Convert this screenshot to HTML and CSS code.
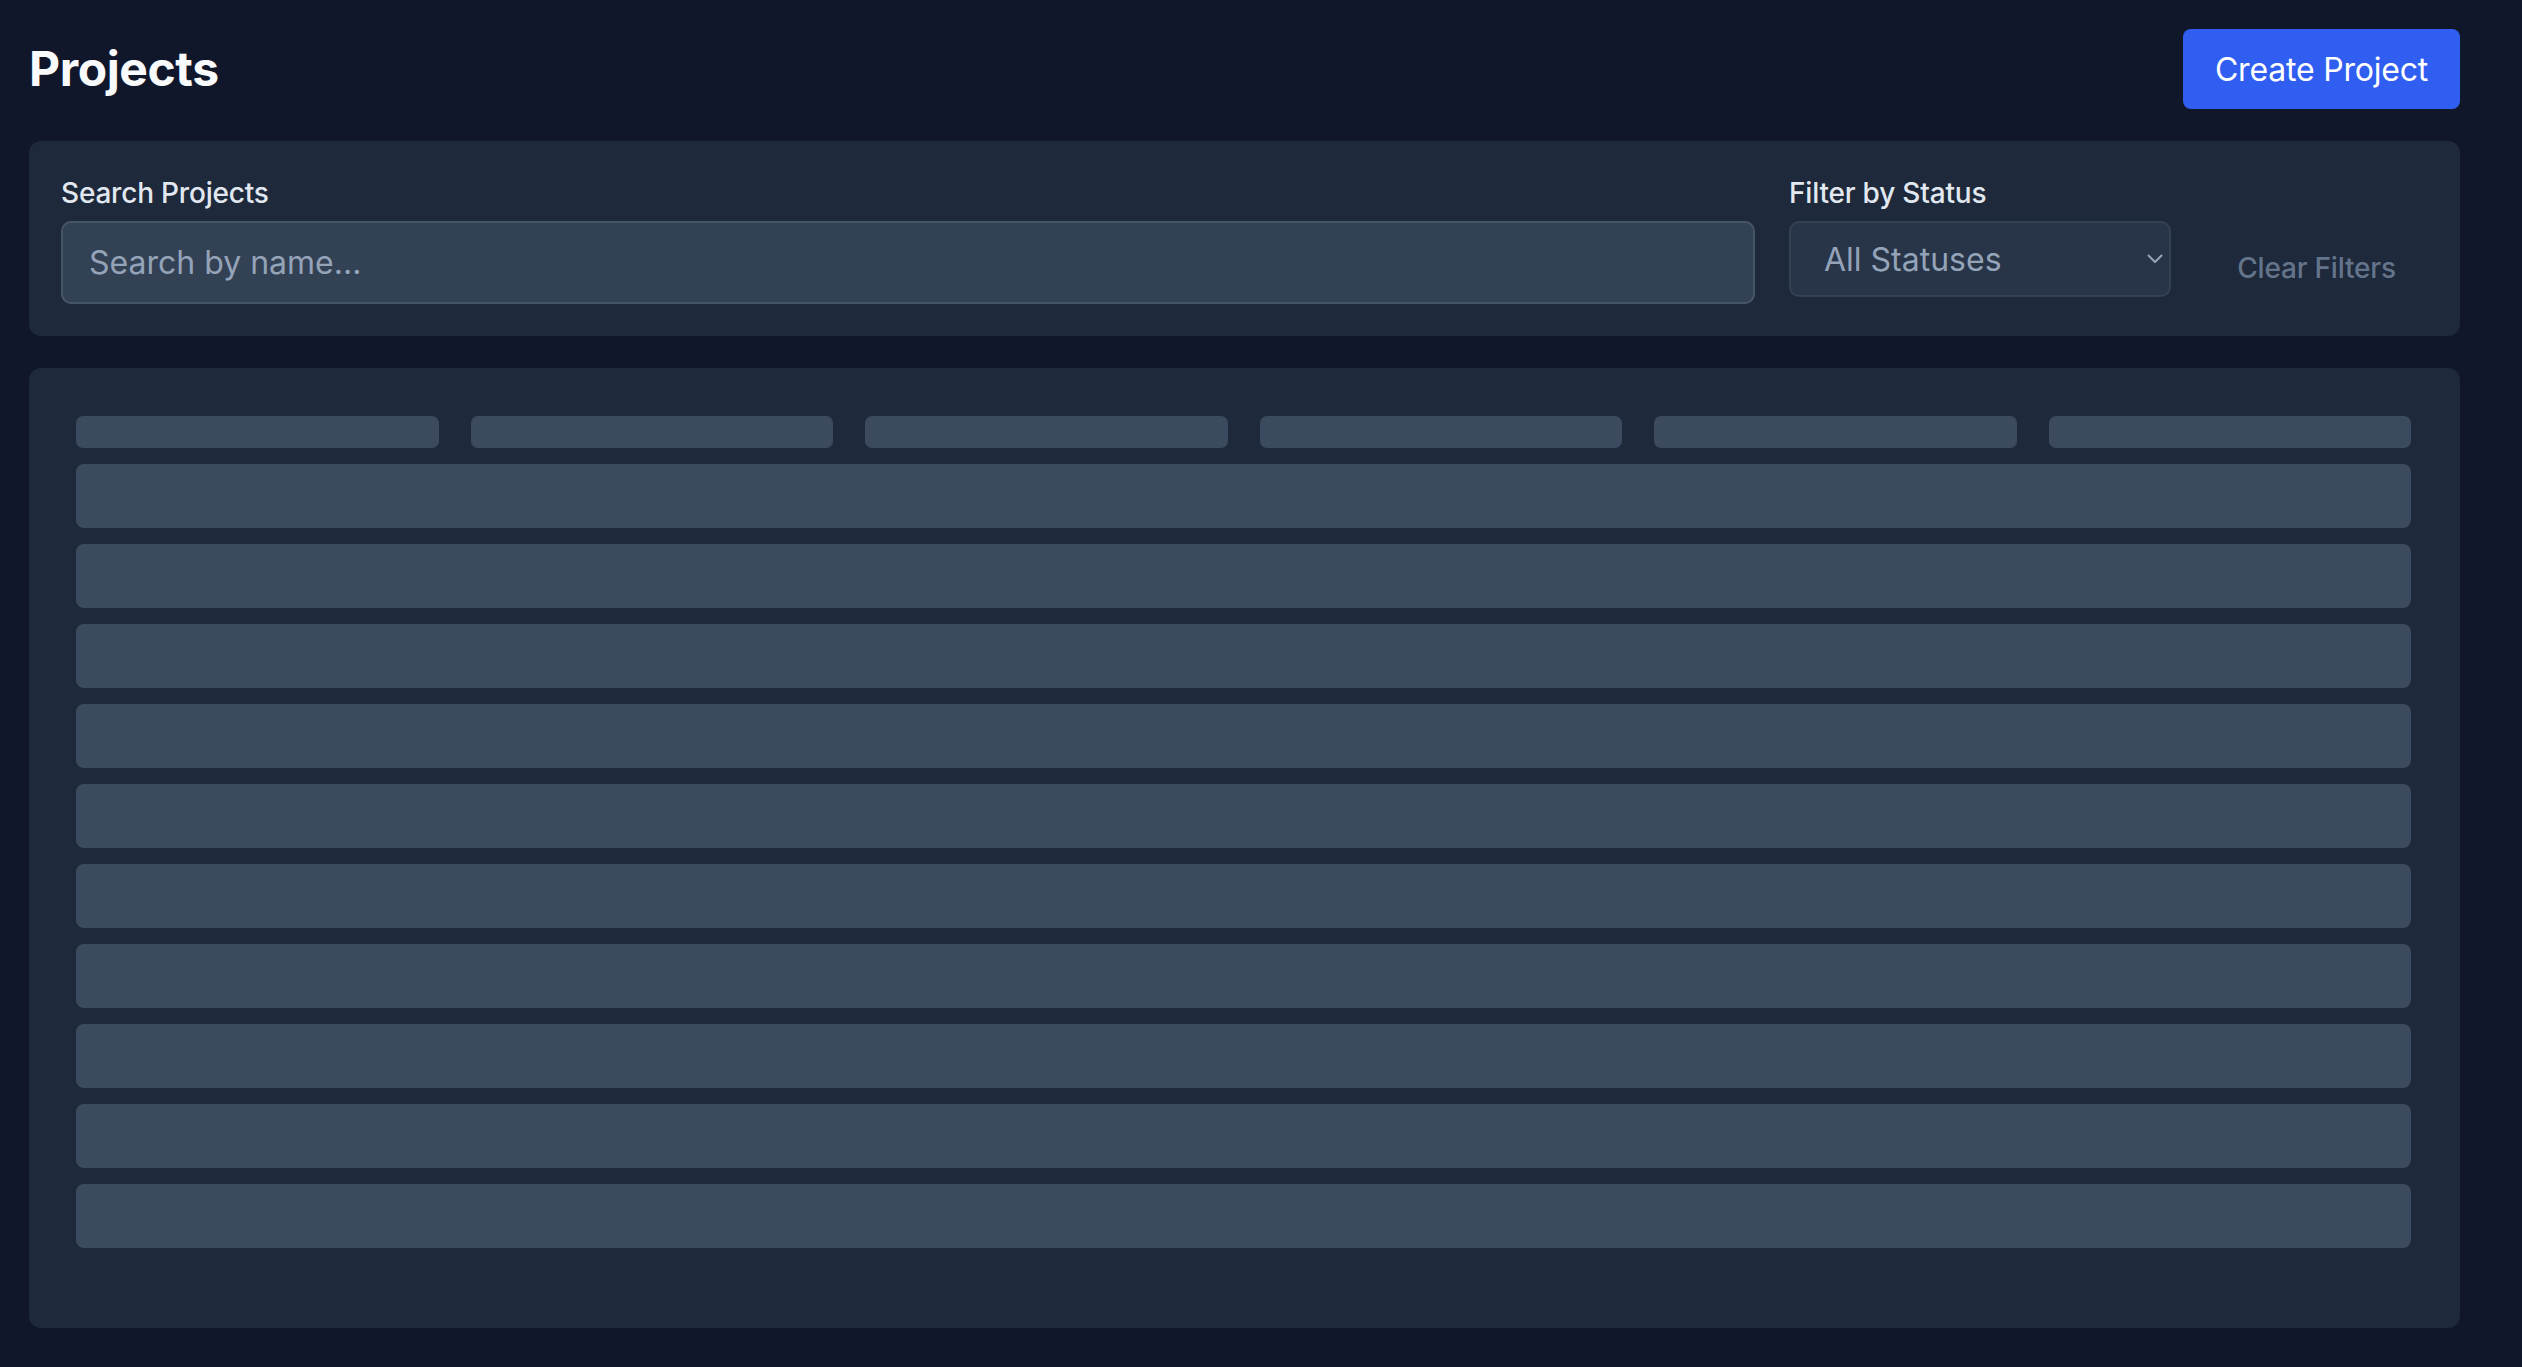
FILE: index.html
```html
<!DOCTYPE html>
<html lang="en">
<head>
    <meta charset="UTF-8">
    <meta name="viewport" content="width=device-width, initial-scale=1.0">
    <title>Projects</title>
    <link rel="stylesheet" href="styles.css">
</head>
<body>
    <div class="page">
        <div class="header">
            <h1 class="title">Projects</h1>
            <button class="create-button">Create Project</button>
        </div>

        <div class="filters">
            <div class="field search-field">
                <label class="field-label" for="search">Search Projects</label>
                <input class="search-input" id="search" type="text" placeholder="Search by name...">
            </div>
            <div class="field status-field">
                <label class="field-label" for="status">Filter by Status</label>
                <div class="select-wrap">
                    <select class="status-select" id="status">
                        <option>All Statuses</option>
                        <option>Active</option>
                        <option>Completed</option>
                        <option>Archived</option>
                    </select>
                    <svg class="select-arrow" width="16" height="10" viewBox="0 0 16 10">
                        <path d="M1.5 1.5 L8 8 L14.5 1.5" fill="none" stroke="#94a3b8" stroke-width="2" stroke-linecap="round" stroke-linejoin="round"/>
                    </svg>
                </div>
            </div>
            <button class="clear-button">Clear Filters</button>
        </div>

        <div class="table-card">
            <div class="skeleton-head">
                <div class="skeleton-cell"></div>
                <div class="skeleton-cell"></div>
                <div class="skeleton-cell"></div>
                <div class="skeleton-cell"></div>
                <div class="skeleton-cell"></div>
                <div class="skeleton-cell"></div>
            </div>
            <div class="skeleton-rows">
                <div class="skeleton-row"></div>
                <div class="skeleton-row"></div>
                <div class="skeleton-row"></div>
                <div class="skeleton-row"></div>
                <div class="skeleton-row"></div>
                <div class="skeleton-row"></div>
                <div class="skeleton-row"></div>
                <div class="skeleton-row"></div>
                <div class="skeleton-row"></div>
                <div class="skeleton-row"></div>
            </div>
        </div>
    </div>
</body>
</html>
```

FILE: styles.css
```css
* {
    margin: 0;
    padding: 0;
    box-sizing: border-box;
    font-family: Inter, "Noto Sans", sans-serif;
}

body {
    background-color: #10172a;
    color: #f8fafc;
}

.page {
    padding: 29px 62px 0 29px;
}

.header {
    display: flex;
    justify-content: space-between;
    align-items: center;
    height: 80px;
    margin-bottom: 32px;
}

.title {
    font-size: 48px;
    font-weight: 700;
    line-height: 60px;
    letter-spacing: -0.4px;
    color: #f8fafc;
}

.create-button {
    width: 277px;
    height: 80px;
    padding: 0;
    border: none;
    border-radius: 8px;
    background-color: #2f5ef1;
    color: #ffffff;
    font-size: 32px;
    font-weight: 400;
    letter-spacing: -0.2px;
    cursor: pointer;
}

.filters {
    display: flex;
    align-items: flex-start;
    gap: 34px;
    padding: 32px;
    background-color: #1e293b;
    border-radius: 12px;
}

.field {
    display: flex;
    flex-direction: column;
}

.search-field {
    flex: 1;
}

.status-field {
    width: 382px;
}

.field-label {
    font-size: 28px;
    font-weight: 500;
    line-height: 40px;
    letter-spacing: -0.2px;
    margin-bottom: 8px;
    color: #e2e8f0;
}

.search-input {
    height: 83px;
    padding: 0 26px;
    font-size: 32px;
    color: #e2e8f0;
    background-color: #334155;
    border: 2px solid #475569;
    border-radius: 10px;
    outline: none;
}

.search-input::placeholder {
    color: #94a3b8;
}

.select-wrap {
    position: relative;
}

.status-select {
    appearance: none;
    width: 100%;
    height: 76px;
    padding: 0 33px;
    font-size: 32px;
    color: #94a3b8;
    background-color: #283548;
    border: 2px solid #334155;
    border-radius: 10px;
    outline: none;
}

.select-arrow {
    position: absolute;
    right: 8px;
    top: 33px;
    pointer-events: none;
}

.clear-button {
    align-self: flex-end;
    width: 223px;
    padding: 16px 0;
    border: none;
    background: none;
    font-size: 28px;
    font-weight: 500;
    line-height: 40px;
    letter-spacing: -0.2px;
    color: #64748b;
    cursor: pointer;
}

.table-card {
    margin-top: 32px;
    padding: 48px 49px 80px 47px;
    background-color: #1e293b;
    border-radius: 12px;
}

.skeleton-head {
    display: grid;
    grid-template-columns: repeat(6, 1fr);
    gap: 32px;
    margin-bottom: 16px;
}

.skeleton-cell {
    height: 32px;
    border-radius: 7px;
    background-color: #3c4a5f;
}

.skeleton-rows {
    display: flex;
    flex-direction: column;
    gap: 16px;
}

.skeleton-row {
    height: 64px;
    border-radius: 8px;
    background-color: #3c4a5f;
}
```
